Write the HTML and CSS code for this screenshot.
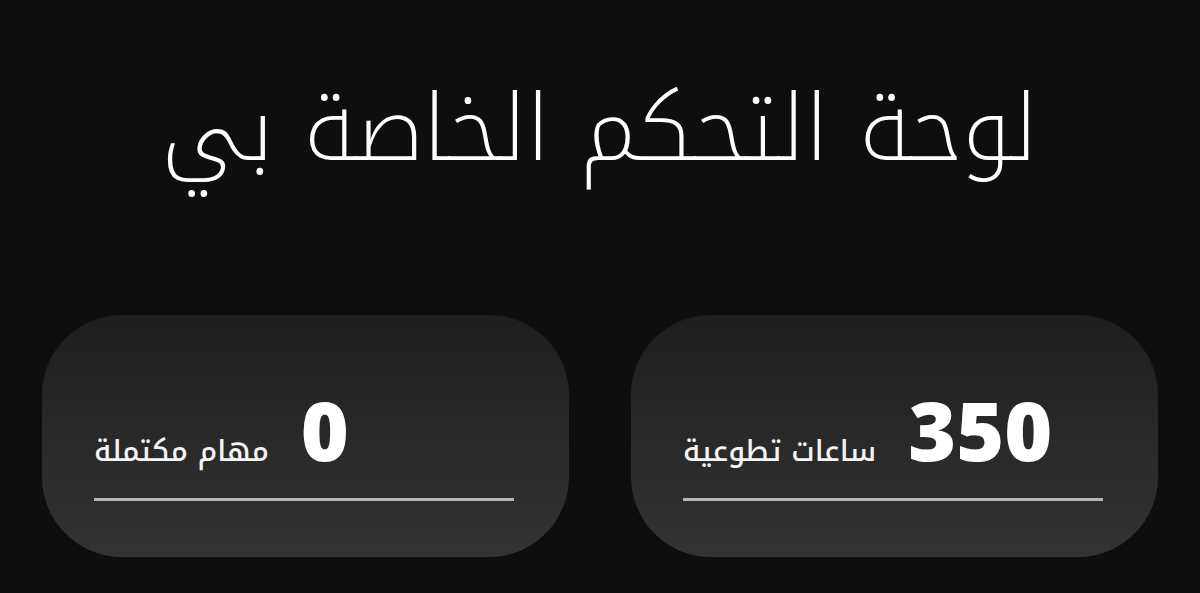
FILE: index.html
```html
<!DOCTYPE html>
<html lang="ar" dir="rtl">
<head>
	<meta charset="utf-8">
	<title>لوحة التحكم</title>
	<link rel="stylesheet" href="styles.css">
</head>
<body>
	<main class="dashboard">
		<h1 class="dash-title">لوحة التحكم الخاصة بي</h1>

		<section class="stats">
			<div class="stat-card">
				<div class="stat-row">
					<span class="stat-value">350</span>
					<span class="stat-label">ساعات تطوعية</span>
				</div>
				<div class="stat-line"></div>
			</div>

			<div class="stat-card">
				<div class="stat-row">
					<span class="stat-value">0</span>
					<span class="stat-label">مهام مكتملة</span>
				</div>
				<div class="stat-line"></div>
			</div>
		</section>
	</main>
</body>
</html>
```

FILE: styles.css
```css
/* Dark dashboard */
body {
	margin: 0;
	padding: 0;
	background-color: #0e0e0e;
	color: #fff;
	font-family: "Noto Kufi Arabic", "Noto Sans Arabic", "DejaVu Sans", sans-serif;
}
.dashboard {
	padding: 0 42px;
}
.dash-title {
	margin: 0;
	padding-top: 75px;
	height: 315px;
	box-sizing: border-box;
	text-align: center;
	font-size: 92px;
	font-weight: 250;
	line-height: 1.2;
}
.stats {
	display: grid;
	grid-template-columns: 1fr 1fr;
	gap: 62px;
}
.stat-card {
	height: 242px;
	box-sizing: border-box;
	display: flex;
	flex-direction: column;
	justify-content: flex-end;
	padding: 0 55px 56px 52px;
	border-radius: 80px;
	background: linear-gradient(to bottom, #1e1e1e, #333);
}
.stat-row {
	display: flex;
	align-items: baseline;
	justify-content: flex-end;
	gap: 32px;
	margin-bottom: 19px;
}
.stat-value {
	font-family: "Open Sans", sans-serif;
	font-size: 82px;
	font-weight: 800;
	line-height: 1;
}
.stat-label {
	font-size: 29px;
	font-weight: 500;
	color: #f4f4f4;
}
.stat-line {
	height: 3px;
	background-color: #b6b6b6;
}
```
